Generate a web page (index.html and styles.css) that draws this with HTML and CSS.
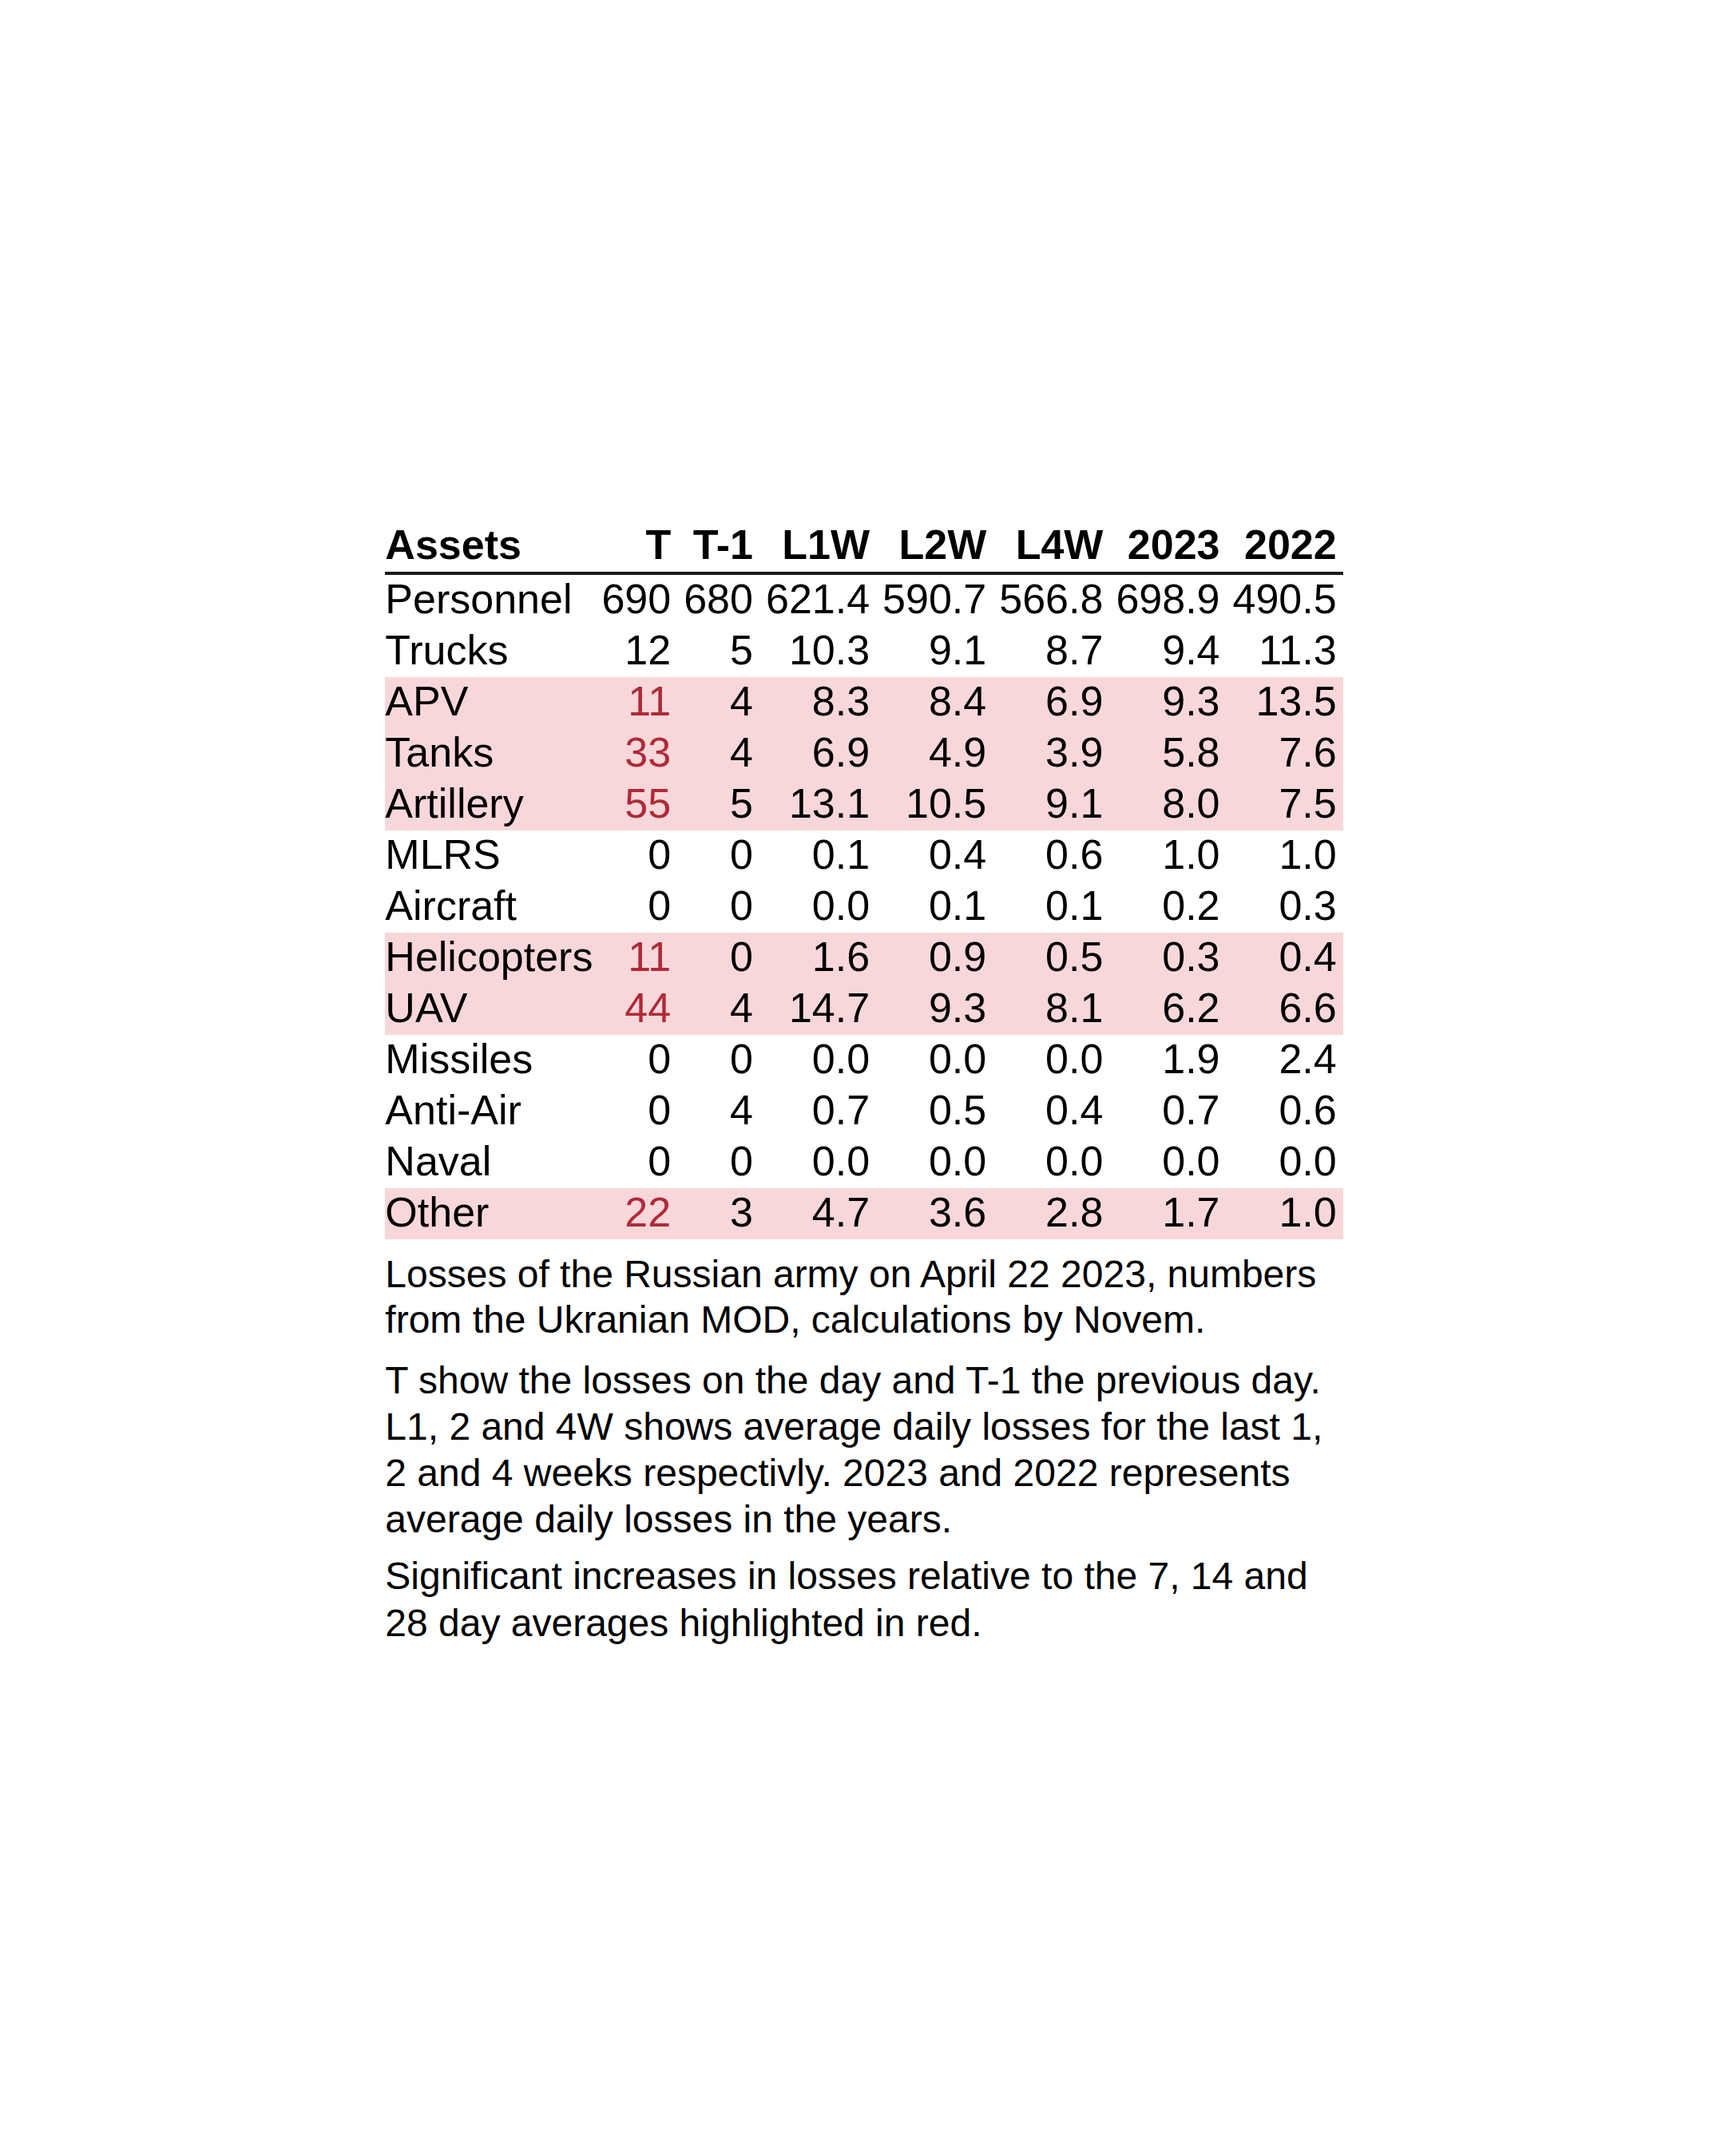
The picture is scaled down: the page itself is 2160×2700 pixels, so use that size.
FILE: index.html
```html
<!DOCTYPE html>
<html lang="en">
<head>
<meta charset="utf-8">
<title>Russian army losses</title>
<link rel="stylesheet" href="styles.css">
</head>
<body>
<div class="page">
<table class="losses">
<caption class="notes">
<p class="note-1">Losses of the Russian army on April 22 2023, numbers from the Ukranian MOD, calculations by Novem.</p>
<p class="note-2">T show the losses on the day and T-1 the previous day. L1, 2 and 4W shows average daily losses for the last 1, 2 and 4 weeks respectivly. 2023 and 2022 represents average daily losses in the years.</p>
<p class="note-3">Significant increases in losses relative to the 7, 14 and 28 day averages highlighted in red.</p>
</caption>
<thead>
<tr><th class="name">Assets</th><th>T</th><th>T-1</th><th>L1W</th><th>L2W</th><th>L4W</th><th>2023</th><th>2022</th></tr>
</thead>
<tbody>
<tr><td class="name">Personnel</td><td>690</td><td>680</td><td>621.4</td><td>590.7</td><td>566.8</td><td>698.9</td><td>490.5</td></tr>
<tr><td class="name">Trucks</td><td>12</td><td>5</td><td>10.3</td><td>9.1</td><td>8.7</td><td>9.4</td><td>11.3</td></tr>
<tr class="hl"><td class="name">APV</td><td class="red">11</td><td>4</td><td>8.3</td><td>8.4</td><td>6.9</td><td>9.3</td><td>13.5</td></tr>
<tr class="hl"><td class="name">Tanks</td><td class="red">33</td><td>4</td><td>6.9</td><td>4.9</td><td>3.9</td><td>5.8</td><td>7.6</td></tr>
<tr class="hl"><td class="name">Artillery</td><td class="red">55</td><td>5</td><td>13.1</td><td>10.5</td><td>9.1</td><td>8.0</td><td>7.5</td></tr>
<tr><td class="name">MLRS</td><td>0</td><td>0</td><td>0.1</td><td>0.4</td><td>0.6</td><td>1.0</td><td>1.0</td></tr>
<tr><td class="name">Aircraft</td><td>0</td><td>0</td><td>0.0</td><td>0.1</td><td>0.1</td><td>0.2</td><td>0.3</td></tr>
<tr class="hl"><td class="name">Helicopters</td><td class="red">11</td><td>0</td><td>1.6</td><td>0.9</td><td>0.5</td><td>0.3</td><td>0.4</td></tr>
<tr class="hl"><td class="name">UAV</td><td class="red">44</td><td>4</td><td>14.7</td><td>9.3</td><td>8.1</td><td>6.2</td><td>6.6</td></tr>
<tr><td class="name">Missiles</td><td>0</td><td>0</td><td>0.0</td><td>0.0</td><td>0.0</td><td>1.9</td><td>2.4</td></tr>
<tr><td class="name">Anti-Air</td><td>0</td><td>4</td><td>0.7</td><td>0.5</td><td>0.4</td><td>0.7</td><td>0.6</td></tr>
<tr><td class="name">Naval</td><td>0</td><td>0</td><td>0.0</td><td>0.0</td><td>0.0</td><td>0.0</td><td>0.0</td></tr>
<tr class="hl"><td class="name">Other</td><td class="red">22</td><td>3</td><td>4.7</td><td>3.6</td><td>2.8</td><td>1.7</td><td>1.0</td></tr>
</tbody>
</table>
</div>
</body>
</html>
```

FILE: styles.css
```css
html, body {
  margin: 0;
  padding: 0;
  background: #ffffff;
}

body {
  font-family: "Liberation Sans", Arial, sans-serif;
  color: #000000;
}

.page {
  padding-top: 652px;
  padding-left: 4px;
}

.losses {
  margin: 0 auto;
  border-collapse: separate;
  border-spacing: 0;
  font-size: 52px;
}

.losses th,
.losses td {
  line-height: 60px;
  height: 60px;
  padding: 0 8px 4px 8px;
  text-align: right;
  white-space: nowrap;
  font-weight: normal;
}

.losses th {
  font-weight: bold;
  border-bottom: 4px solid #1c1c1c;
}

.losses .name {
  text-align: left;
  padding-left: 0;
  padding-right: 3px;
}

.losses tr.hl td {
  background: #f8d7da;
}

.losses .red {
  color: #b02a37;
}

.notes {
  caption-side: bottom;
  text-align: left;
  font-size: 48px;
  padding-top: 15px;
}

.notes p {
  margin: 0;
}

.note-1 {
  line-height: 57px;
}

.note-2 {
  line-height: 58px;
  margin-top: 19px !important;
}

.note-3 {
  line-height: 59px;
  margin-top: 12px !important;
}
```
